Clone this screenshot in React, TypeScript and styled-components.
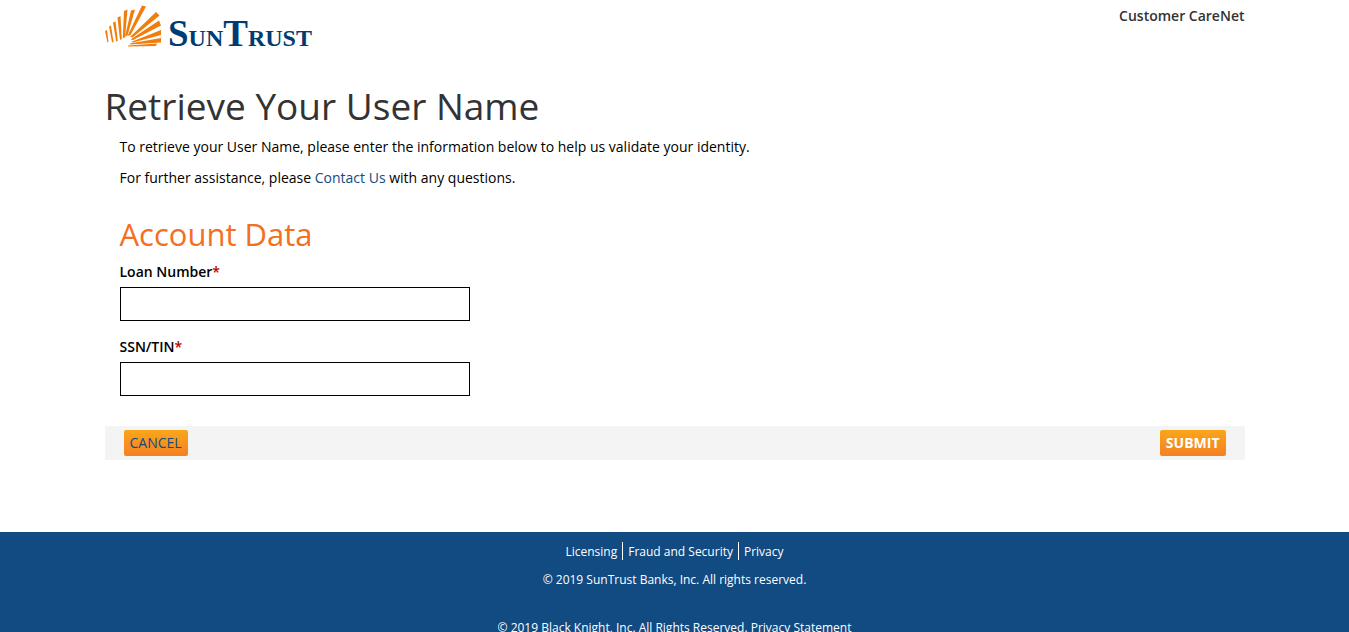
import React from "react";
import styled, { createGlobalStyle } from "styled-components";

const GlobalStyle = createGlobalStyle`
  * { box-sizing: border-box; }
  body {
    margin: 0;
    background: #fff;
    color: #000;
    font: 14px/20px "Open Sans", sans-serif;
  }
`;

const Container = styled.div`
  max-width: 1140px;
  margin: 0 auto;
`;

const Header = styled.header`
  display: flex;
  justify-content: space-between;
  align-items: flex-start;
`;

const LogoLink = styled.a`
  display: block;
`;

const SiteName = styled.strong`
  padding-top: 6px;
  color: #333;
  font-weight: 600;
`;

const PageTitle = styled.h1`
  margin: 27px 0 0;
  color: #333;
  font-size: 37px;
  line-height: 46px;
  font-weight: 400;
`;

const Body = styled.div`
  padding: 8px 15px 30px;
`;

const Paragraph = styled.p`
  margin: 0 0 11px;
`;

const SectionTitle = styled.h2`
  margin: 26px 0 8px;
  color: #f36f21;
  font-size: 31px;
  line-height: 40px;
  font-weight: 400;
`;

const Field = styled.div`
  display: flex;
  flex-direction: column;
  gap: 5px;
  max-width: 350px;
  margin-bottom: 16px;

  &:last-child {
    margin-bottom: 0;
  }
`;

const Label = styled.label`
  font-weight: 600;
`;

const Required = styled.span`
  color: #b00;
`;

const TextInput = styled.input`
  width: 100%;
  height: 34px;
  padding: 6px 12px;
  border: 1px solid #000;
  background: #fff;
  font: inherit;
`;

const ActionBar = styled.div`
  display: flex;
  justify-content: space-between;
  padding: 4px 19px;
  background: #f4f4f4;
`;

const Button = styled.button<{ $primary?: boolean }>`
  height: 26px;
  padding: 0 6px;
  border: 0;
  border-radius: 2px;
  background: linear-gradient(#faa61a, #f58025);
  color: ${(p) => (p.$primary ? "#fff" : "#124a82")};
  font: inherit;
  font-weight: ${(p) => (p.$primary ? 700 : 400)};
  cursor: pointer;
`;

const Link = styled.a`
  color: #124a82;
  text-decoration: none;
`;

const Footer = styled.footer`
  margin-top: 72px;
  padding: 10px 15px 20px;
  background: #124a82;
  color: #fff;
  font-size: 12px;
  line-height: 18px;
  text-align: center;
`;

const FooterLinks = styled.nav`
  display: flex;
  justify-content: center;
  margin-bottom: 11px;
  line-height: 16px;
`;

const FooterLink = styled.a`
  color: #fff;
  text-decoration: none;
`;

const FooterNavLink = styled(FooterLink)`
  padding: 2px 5px 0;

  & + & {
    border-left: 1px solid #fff;
  }
`;

const Copyright = styled.p`
  margin: 0 0 30px;
`;

const rays = [
  "0,26 2,25 3.5,37 2.5,37.5",
  "4,21.5 6,20.5 8.5,37 7,37.5",
  "8,17.5 10.5,16.5 12.8,36 11.2,36.5",
  "12.5,12.5 15.5,11 16.8,34 15,35",
  "19,6 22.5,4.5 20,32.5 17.8,33",
  "26,5.5 30,4.5 22.5,30.5 20,31.5",
  "37,0.5 41,1.5 25.5,30 22.5,31",
  "51,7 54.5,10.5 27.5,32.5 25,32",
  "54,15.5 56,20.5 28,35 25.5,34.5",
  "56,25 56,30 28,37.5 26,37",
  "56,33 56,37.5 25,39.5 25,38.5",
  "52,38.5 51,41 23,41.5 23,40.5",
];

const Wordmark = styled.text`
  fill: #003c71;
  font: 700 37px "Liberation Serif", serif;
`;

const SmallCaps = styled.tspan`
  font-size: 24px;
`;

function Logo() {
  return (
    <svg width="210" height="56" viewBox="0 0 210 56" role="img" aria-label="SunTrust" display="block">
      <g transform="translate(0 5)" fill="#f07d0c">
        {rays.map((points) => (
          <polygon key={points} points={points} />
        ))}
      </g>
      <Wordmark x="63" y="46">
        S<SmallCaps>UN</SmallCaps>T<SmallCaps>RUST</SmallCaps>
      </Wordmark>
    </svg>
  );
}

export default function App() {
  return (
    <>
      <GlobalStyle />
      <Container>
        <Header>
          <LogoLink href="#">
            <Logo />
          </LogoLink>
          <SiteName>Customer CareNet</SiteName>
        </Header>
        <main>
          <PageTitle>Retrieve Your User Name</PageTitle>
          <form>
            <Body>
              <Paragraph>
                To retrieve your User Name, please enter the information below to help us validate your identity.
              </Paragraph>
              <Paragraph>
                For further assistance, please <Link href="#">Contact Us</Link> with any questions.
              </Paragraph>
              <SectionTitle>Account Data</SectionTitle>
              <Field>
                <Label htmlFor="loan-number">
                  Loan Number<Required>*</Required>
                </Label>
                <TextInput id="loan-number" type="text" />
              </Field>
              <Field>
                <Label htmlFor="ssn">
                  SSN/TIN<Required>*</Required>
                </Label>
                <TextInput id="ssn" type="text" />
              </Field>
            </Body>
            <ActionBar>
              <Button type="button">CANCEL</Button>
              <Button type="submit" $primary>
                SUBMIT
              </Button>
            </ActionBar>
          </form>
        </main>
      </Container>
      <Footer>
        <FooterLinks>
          <FooterNavLink href="#">Licensing</FooterNavLink>
          <FooterNavLink href="#">Fraud and Security</FooterNavLink>
          <FooterNavLink href="#">Privacy</FooterNavLink>
        </FooterLinks>
        <Copyright>© 2019 SunTrust Banks, Inc. All rights reserved.</Copyright>
        <Copyright>
          © 2019 Black Knight, Inc. All Rights Reserved. <FooterLink href="#">Privacy Statement</FooterLink>
        </Copyright>
      </Footer>
    </>
  );
}
